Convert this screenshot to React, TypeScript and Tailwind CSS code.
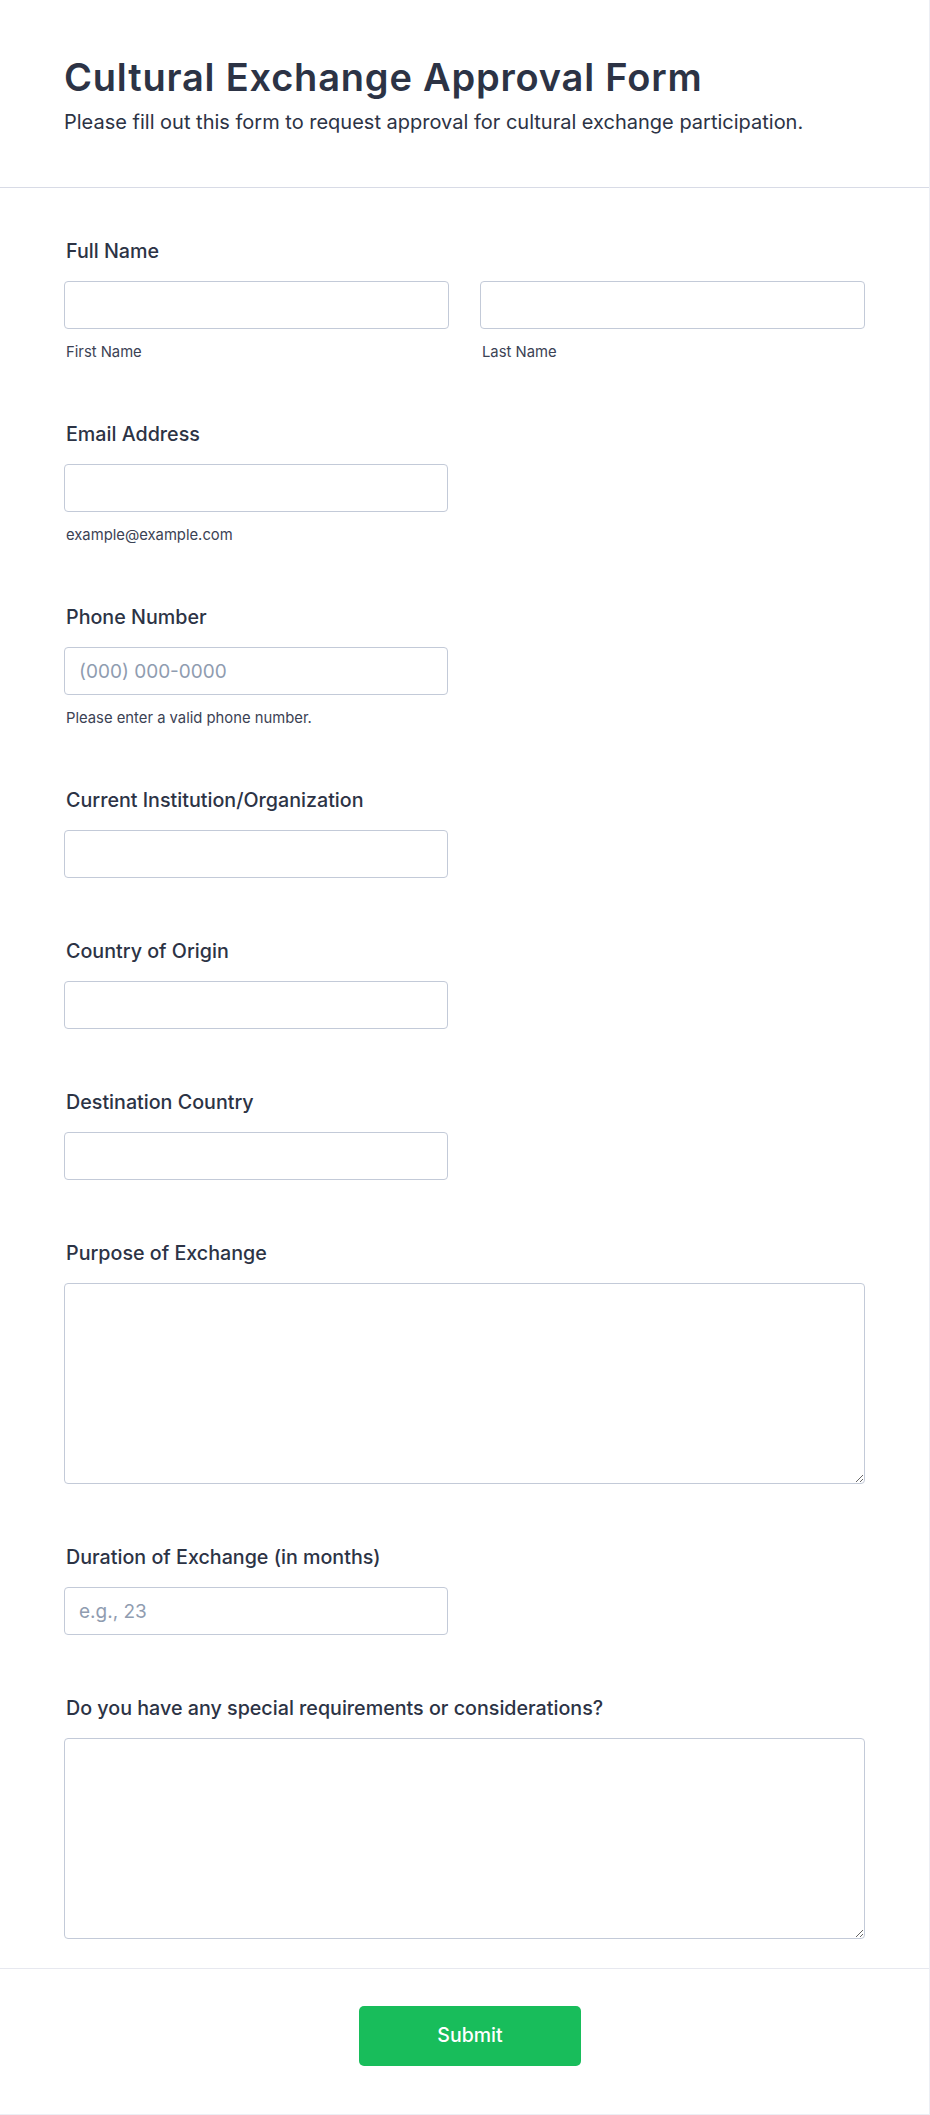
export default function App() {
  return (
    <div className="min-h-screen bg-white font-['Inter',sans-serif] [font-optical-sizing:none] [font-variation-settings:'opsz'_14] text-[#2c3345]">
      <div className="border-r border-b border-[#eceef4]">
        <header className="px-16 pt-[56px] pb-[51px] border-b border-[#d8dbe6]">
          <h1 className="text-[38px] leading-[43px] font-semibold tracking-[0.8px]">
            Cultural Exchange Approval Form
          </h1>
          <p className="mt-[10px] text-[20px] leading-[27px]">
            Please fill out this form to request approval for cultural exchange participation.
          </p>
        </header>

        <form className="px-16 pt-[50px] pb-[29px] flex flex-col gap-[60px]">
          <Field label="Full Name">
            <div className="grid grid-cols-2 gap-[31px]">
              <div>
                <TextInput />
                <SubLabel>First Name</SubLabel>
              </div>
              <div>
                <TextInput />
                <SubLabel>Last Name</SubLabel>
              </div>
            </div>
          </Field>

          <Field label="Email Address">
            <TextInput half type="email" />
            <SubLabel>example@example.com</SubLabel>
          </Field>

          <Field label="Phone Number">
            <TextInput half placeholder="(000) 000-0000" />
            <SubLabel>Please enter a valid phone number.</SubLabel>
          </Field>

          <Field label="Current Institution/Organization">
            <TextInput half />
          </Field>

          <Field label="Country of Origin">
            <TextInput half />
          </Field>

          <Field label="Destination Country">
            <TextInput half />
          </Field>

          <Field label="Purpose of Exchange">
            <TextArea />
          </Field>

          <Field label="Duration of Exchange (in months)">
            <TextInput half placeholder="e.g., 23" />
          </Field>

          <Field label="Do you have any special requirements or considerations?">
            <TextArea />
          </Field>
        </form>

        <div className="border-t border-[#e6e8ef] pt-[37px] pb-[48px] pl-[11px] flex justify-center">
          <button
            type="button"
            className="w-[222px] h-[60px] rounded-[5px] bg-[#18bd5b] text-white text-[19.5px] font-medium"
          >
            Submit
          </button>
        </div>
      </div>
    </div>
  );
}

function Field({ label, children }: { label: string; children: React.ReactNode }) {
  return (
    <div>
      <label className="block px-[2px] text-[19.7px] leading-[27px] font-medium mb-[16px]">{label}</label>
      {children}
    </div>
  );
}

function TextInput({
  half,
  placeholder,
  type = "text",
}: {
  half?: boolean;
  placeholder?: string;
  type?: string;
}) {
  return (
    <input
      type={type}
      placeholder={placeholder}
      className={
        (half ? "w-[384px] " : "w-full ") +
        "block h-12 rounded-[4px] border border-[#c3cad8] bg-white px-[14px] text-[19px] placeholder:text-[#8f9cb0] outline-none"
      }
    />
  );
}

function TextArea() {
  return (
    <textarea className="block w-full h-[201px] rounded-[4px] border border-[#c3cad8] bg-white px-[14px] py-3 text-[19px] outline-none" />
  );
}

function SubLabel({ children }: { children: React.ReactNode }) {
  return <div className="mt-[15px] px-[2px] text-[14.8px] leading-[17px] text-[#3b4254]">{children}</div>;
}
